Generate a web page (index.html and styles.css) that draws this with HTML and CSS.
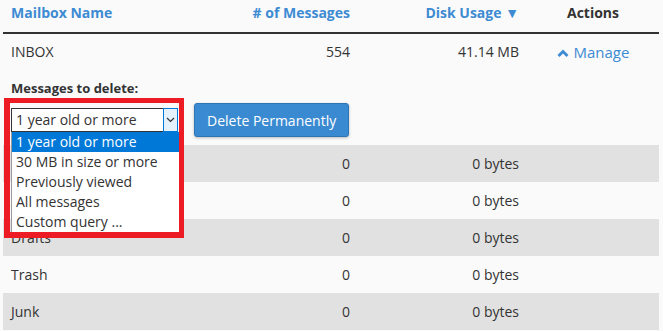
FILE: index.html
```html
<!DOCTYPE html>
<html lang="en">

<head>
    <meta charset="UTF-8">
    <title>Mailboxes</title>
    <link rel="stylesheet" href="styles.css">
</head>

<body>
    <table class="mailboxes">
        <thead>
            <tr>
                <th class="col-name"><a href="#">Mailbox Name</a></th>
                <th class="col-count"><a href="#"># of Messages</a></th>
                <th class="col-usage"><a href="#">Disk Usage <span class="sort">&#9660;</span></a></th>
                <th class="col-actions">Actions</th>
            </tr>
        </thead>
        <tbody>
            <tr>
                <td>INBOX</td>
                <td class="num">554</td>
                <td class="num">41.14 MB</td>
                <td class="actions">
                    <a href="#" class="manage">
                        <svg width="12" height="8" viewBox="0 0 12 8">
                            <polyline points="1.5,7 6,2.5 10.5,7" fill="none" stroke="#3d8bd3" stroke-width="2.8" />
                        </svg>
                        Manage
                    </a>
                </td>
            </tr>
            <tr class="details">
                <td colspan="4">
                    <div class="details-label">Messages to delete:</div>
                    <div class="details-controls">
                        <div class="picker">
                            <div class="picker-box">
                                <span class="picker-value">1 year old or more</span>
                                <span class="picker-arrow">
                                    <svg width="9" height="6" viewBox="0 0 9 6">
                                        <polyline points="1,1 4.5,4.5 8,1" fill="none" stroke="#333" stroke-width="1.2" />
                                    </svg>
                                </span>
                            </div>
                            <ul class="picker-menu">
                                <li class="selected">1 year old or more</li>
                                <li>30 MB in size or more</li>
                                <li>Previously viewed</li>
                                <li>All messages</li>
                                <li>Custom query ...</li>
                            </ul>
                            <div class="callout"></div>
                        </div>
                        <button class="btn-delete">Delete Permanently</button>
                    </div>
                </td>
            </tr>
            <tr class="odd">
                <td>Sent</td>
                <td class="num">0</td>
                <td class="num">0 bytes</td>
                <td></td>
            </tr>
            <tr>
                <td>Archive</td>
                <td class="num">0</td>
                <td class="num">0 bytes</td>
                <td></td>
            </tr>
            <tr class="odd">
                <td>Drafts</td>
                <td class="num">0</td>
                <td class="num">0 bytes</td>
                <td></td>
            </tr>
            <tr>
                <td>Trash</td>
                <td class="num">0</td>
                <td class="num">0 bytes</td>
                <td></td>
            </tr>
            <tr class="odd">
                <td>Junk</td>
                <td class="num">0</td>
                <td class="num">0 bytes</td>
                <td></td>
            </tr>
        </tbody>
    </table>
</body>

</html>
```

FILE: styles.css
```css
* {
    box-sizing: border-box;
}

body {
    margin: 0;
    padding: 0;
    font-family: 'Open Sans', sans-serif;
    font-size: 14px;
    color: #333333;
    background: #fafafa;
    overflow: hidden;
}

a {
    color: #3d8bd3;
    text-decoration: none;
}

.mailboxes {
    width: 656px;
    margin-left: 3px;
    border-collapse: collapse;
    table-layout: fixed;
}

.mailboxes th {
    height: 32px;
    padding: 0 8px 6px;
    line-height: 26px;
    font-weight: 700;
    border-bottom: 2px solid #333333;
    white-space: nowrap;
}

.col-name {
    width: 237px;
    text-align: left;
}

.col-count {
    width: 118px;
    text-align: right;
}

.col-usage {
    width: 169px;
    text-align: right;
}

.col-actions {
    text-align: center;
}

.sort {
    font-size: 14px;
    line-height: 20px;
}

.mailboxes td {
    height: 37px;
    padding: 0 8px;
    line-height: 20px;
    white-space: nowrap;
}

.mailboxes td.num {
    text-align: right;
}

.mailboxes td.actions {
    text-align: center;
}

.mailboxes tr.odd td {
    background: #e1e1e1;
}

.manage {
    font-size: 15px;
    line-height: 20px;
}

.manage svg {
    margin-right: 1px;
    vertical-align: 1px;
}

.mailboxes .details td {
    height: 75px;
    padding: 9px 8px 8px;
    vertical-align: top;
}

.details-label {
    font-weight: 700;
    font-size: 13px;
    line-height: 18px;
}

.details-controls {
    display: flex;
    align-items: center;
    gap: 16px;
    margin-top: 6px;
}

.picker {
    position: relative;
    width: 167px;
}

.picker-box {
    display: flex;
    height: 24px;
    background: #ffffff;
    border: 1px solid #333333;
}

.picker-value {
    flex: 1;
    padding-left: 4px;
    line-height: 22px;
}

.picker-arrow {
    width: 15px;
    margin: -1px -1px -1px 0;
    display: flex;
    align-items: center;
    justify-content: center;
    background: #e5f1fb;
    border: 1px solid #0078d7;
}

.picker-menu {
    position: absolute;
    top: 24px;
    left: 0;
    width: 168px;
    margin: 0;
    padding: 0;
    list-style: none;
    background: #ffffff;
    border-left: 1px solid #9a9a9a;
    z-index: 2;
}

.picker-menu li {
    height: 20px;
    padding-left: 4px;
    line-height: 20px;
}

.picker-menu li.selected {
    background: #0078d7;
    color: #ffffff;
}

.callout {
    position: absolute;
    top: -10px;
    left: -7px;
    width: 180px;
    height: 140px;
    border: solid #ed1c24;
    border-width: 5px 5px 6px 6px;
    z-index: 3;
}

.btn-delete {
    height: 34px;
    padding: 0 12px;
    font-family: 'Open Sans', sans-serif;
    font-size: 14px;
    color: #ffffff;
    background: #3a8ad1;
    border: 1px solid #2f75b6;
    border-radius: 3px;
    box-shadow: 0 1px 3px rgba(0, 0, 0, 0.25);
}
```
